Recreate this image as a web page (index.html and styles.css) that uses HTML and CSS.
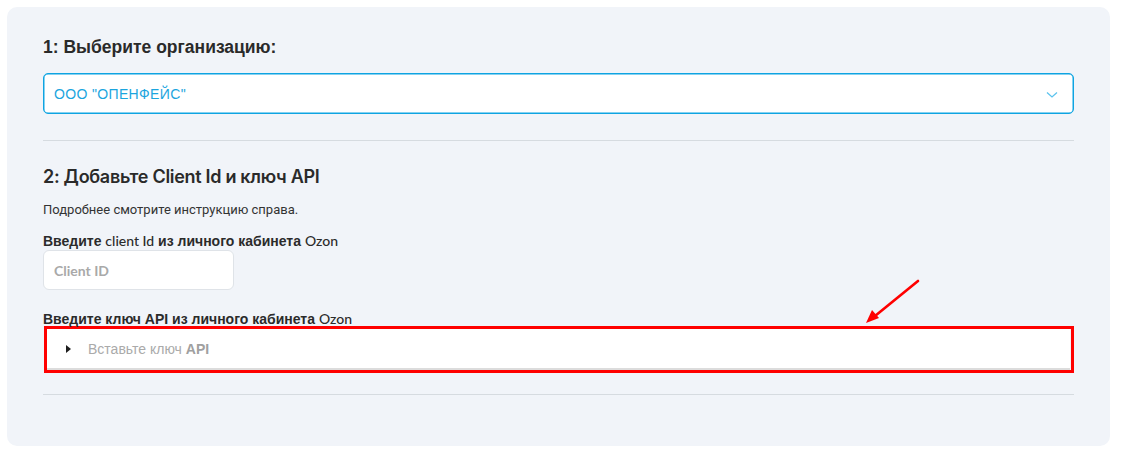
FILE: index.html
```html
<!DOCTYPE html>
<html lang="ru">
<head>
<meta charset="utf-8">
<title>Ozon</title>
<link rel="stylesheet" href="styles.css">
</head>
<body>
<div class="card">
  <h1 class="h1">1: Выберите организацию:</h1>
  <div class="select">
    <span class="select-value">ООО "ОПЕНФЕЙС"</span>
    <svg class="chev" width="12" height="8" viewBox="0 0 12 8"><path d="M1 1.5 L6 6 L11 1.5" fill="none" stroke="#5cc3ee" stroke-width="1.3"/></svg>
  </div>
  <div class="divider first"></div>
  <h2 class="h2">2: Добавьте Client Id и ключ API</h2>
  <p class="hint">Подробнее смотрите инструкцию справа.</p>
  <div class="label">Введите <span class="lat">client Id</span> из личного кабинета <span class="lat">Ozon</span></div>
  <div class="input"><span class="ph-id">Client ID</span></div>
  <div class="label second">Введите ключ API из личного кабинета <span class="lat">Ozon</span></div>
  <div class="highlight">
    <div class="textarea">
      <span class="tri"></span>
      <span class="ph-key">Вставьте ключ <b>API</b></span>
    </div>
  </div>
  <div class="divider last"></div>
  <svg class="arrow" width="60" height="50" viewBox="0 0 60 50">
    <line x1="55" y1="4" x2="12" y2="39" stroke="#ff0000" stroke-width="2.6" stroke-linecap="round"/>
    <polygon points="3,46 9,33 16,41" fill="#ff0000"/>
  </svg>
</div>
</body>
</html>
```

FILE: styles.css
```css
* { box-sizing: border-box; }
html, body { margin: 0; padding: 0; background: #ffffff; }
body { padding: 7px; font-family: "Liberation Sans", Arial, sans-serif; color: #333; }
.card {
  position: relative;
  width: 1103px;
  height: 439px;
  background: #f1f4f9;
  border-radius: 10px;
  padding: 28px 36px 0 36px;
}
.h1 {
  margin: 0;
  font-size: 17.5px;
  line-height: 24px;
  font-weight: bold;
  color: #2a2a2a;
}
.select {
  margin-top: 14px;
  height: 41px;
  background: #fff;
  border: 1px solid #0ea4e2;
  box-shadow: inset 0 0 0 0.5px #0ea4e2;
  border-radius: 5px;
  display: flex;
  align-items: center;
  justify-content: space-between;
  padding: 0 15px 0 10px;
}
.select-value { font-size: 14px; color: #1ba5de; letter-spacing: 0.35px; }
.chev { margin-top: 2px; }
.divider { height: 1px; background: #d6dbe0; }
.divider.first { margin-top: 26px; }
.h2 {
  margin: 24px 0 0 0;
  font-family: Inter, "Noto Sans", sans-serif;
  font-size: 18px;
  line-height: 24px;
  font-weight: 600;
  color: #2a2a2a;
  letter-spacing: -0.3px;
}
.hint {
  margin: 12px 0 0 0;
  font-family: Roboto, sans-serif;
  font-size: 13px;
  line-height: 18px;
  color: #333;
  letter-spacing: 0;
}
.label {
  margin-top: 14px;
  font-size: 14px;
  line-height: 16px;
  font-weight: bold;
  color: #2b2b2b;
}
.label .lat { font-family: Lato, sans-serif; font-weight: 500; }
.label.second { margin-top: 21px; }
.input {
  margin-top: 1px;
  width: 191px;
  height: 40px;
  background: #fff;
  border: 1px solid #dfe3e8;
  border-radius: 6px;
  display: flex;
  align-items: center;
  padding-left: 10px;
}
.ph-id { font-family: Lato, sans-serif; font-weight: bold; font-size: 14px; color: #a9a9a9; }
.highlight {
  margin-top: -1px;
  height: 47px;
  border: 3px solid #ff0000;
  margin-left: 1px;
}
.textarea {
  height: 41px;
  margin-right: 1px;
  background: #fff;
  border-bottom: 2px solid #dcdcdc;
  display: flex;
  align-items: center;
  padding-left: 19px;
}
.tri {
  width: 0; height: 0;
  border-top: 4px solid transparent;
  border-bottom: 4px solid transparent;
  border-left: 5px solid #1e1e1e;
  margin-right: 17px;
}
.ph-key { font-size: 14px; color: #aaaaaa; }
.ph-key b { color: #a0a0a0; }
.divider.last { margin-top: 21px; }
.arrow { position: absolute; left: 856px; top: 270px; }
```
